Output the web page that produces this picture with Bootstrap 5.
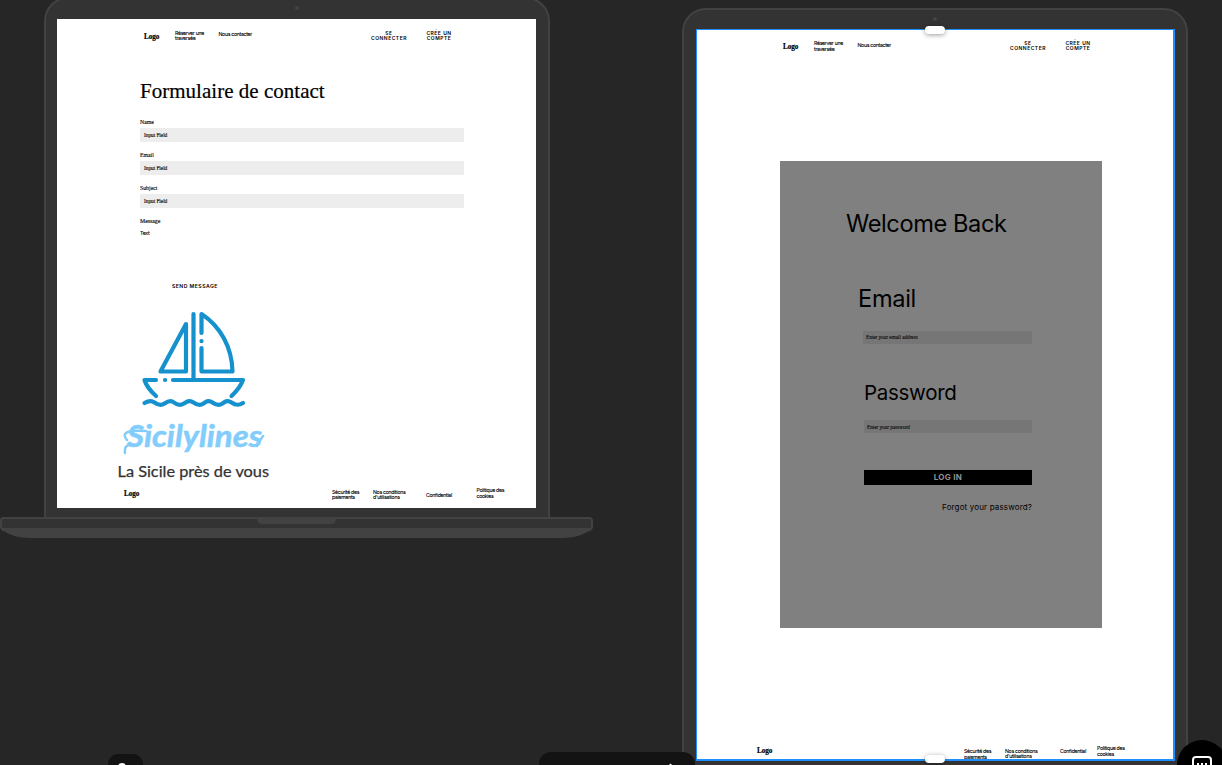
<!DOCTYPE html>
<html lang="fr">
<head>
<meta charset="utf-8">
<meta name="viewport" content="width=device-width, initial-scale=1">
<title>Sicilylines</title>
<link href="https://cdn.jsdelivr.net/npm/bootstrap@5.3.0/dist/css/bootstrap.min.css" rel="stylesheet">
<style>
body{background:#262626;color:#000;font-family:Inter,"Liberation Sans",sans-serif;font-size:5.2px;line-height:5px}
.board{width:1222px;height:765px}
.serif{font-family:"Liberation Serif",serif}
/* devices placed on the free canvas */
.device{background:#333;border:2px solid #424242}
.laptop{left:44px;top:-3px;width:506px;height:520px;border-radius:24px 24px 0 0;border-bottom:0;padding:20px 11px 0}
.tablet{left:682px;top:8px;width:506px;height:800px;border-radius:24px;padding:19px 12px 0}
.cam{width:4px;height:4px;background:#444;left:249px}
.base{left:0;top:516px}
.screen{width:479px;height:489px;background:#fff}
.tablet .screen{height:732px}
.selection{left:696px;top:29px;width:479px;height:732px;border:solid #1e8fff;border-width:1px 2px 2px 1px}
.handle{width:20px;height:8px;left:925px;background:#fff;box-shadow:0 1px 5px #0006}
.topnav{height:48px;padding:12px 0 0 87px;display:grid;grid-template-columns:31px 43.5px 140px 60px 40px;align-items:start}
.brandname{font-weight:700;font-size:7.2px;line-height:8px;letter-spacing:-.1px;-webkit-text-stroke:.2px #000}
.topnav .brandname{margin-top:2px}
.navtext{letter-spacing:-.3px;-webkit-text-stroke:.1px #000}
.navbtn{font-weight:600;letter-spacing:.5px;width:61px;text-align:center;font-size:5px}
.contact{padding:11px 0 0 83px;width:407px;height:214px}
.contact h1{font-size:21px;line-height:26px;margin:0 0 14px;letter-spacing:.02px;white-space:nowrap;-webkit-text-stroke:.2px #000}
.lbl{font-size:5.8px;line-height:8px;margin-bottom:2px;letter-spacing:0}
.field{background:#ededed;height:14px;padding:0 4px;font-size:5.4px;line-height:14px;margin-bottom:9px;letter-spacing:-.05px}
.lbl,.field,.inp{-webkit-text-stroke:.12px #000}
.sendrow{padding-left:115px;height:28px;font-weight:600;font-size:5.2px;letter-spacing:.42px;line-height:10px}
.foot{display:grid;align-items:start}
.foot-a{height:24px;padding-left:67px;grid-template-columns:208px 41px 53px 50.5px 50px}
.foot-b{height:20px;padding-left:61px;grid-template-columns:207px 41px 55px 37px 50px}
.login{background:#808080;width:322px;height:467px;margin:84px 0 114px 84px;padding:46px 70px 0 66px}
.login h2{font-size:23.6px;line-height:34px;margin:0;font-weight:400;white-space:nowrap;letter-spacing:-.3px}
.login .inp{background:#767676;height:13px;line-height:13px;font-size:5.2px;padding-left:3px;color:#151515}
.loginbtn{background:#000;color:#929292;height:15px;font-size:8px;line-height:15px;font-weight:700;letter-spacing:.3px}
.forgot{font-size:8px;line-height:12px;letter-spacing:.15px}
.toolbar1{left:539px;top:752px;width:156px;height:30px;background:#131313;border-radius:12px}
.tool2{left:108px;top:754px;width:35px;height:30px;background:#131313;border-radius:10px}
.chat{left:1177px;top:740px;width:50px;height:50px;background:#000}
</style>
<script src="https://cdn.jsdelivr.net/npm/bootstrap@5.3.0/dist/js/bootstrap.bundle.min.js"></script>
</head>
<body class="m-0 overflow-hidden">
<main class="board position-relative overflow-hidden">
  <section class="device laptop position-absolute">
    <span class="cam rounded-circle position-absolute" style="top:7px"></span>
    <div class="screen overflow-hidden">
      <nav class="topnav">
        <div class="brandname serif">Logo</div>
        <div class="navtext">Réserver une<br>traversée</div>
        <div class="navtext" style="margin-top:1px">Nous contacter</div>
        <div class="navbtn">SE<br>CONNECTER</div>
        <div class="navbtn" style="margin-left:-10px">CRÉE UN<br>COMPTE</div>
      </nav>
      <div class="contact serif">
        <h1>Formulaire de contact</h1>
        <div class="lbl">Name</div><div class="field">Input Field</div>
        <div class="lbl">Email</div><div class="field">Input Field</div>
        <div class="lbl">Subject</div><div class="field">Input Field</div>
        <div class="lbl">Message</div>
        <div class="navtext" style="font-family:Inter,sans-serif;margin-top:6px">Text</div>
      </div>
      <div class="sendrow">SEND MESSAGE</div>
      <svg class="d-block" style="margin-left:53px" width="170" height="178" viewBox="110 309 170 178">
        <g fill="none" stroke="#1591ce" stroke-width="4.200" stroke-linecap="round" stroke-linejoin="round">
          <path d="M193.500 314V379M186 324 160.500 371.500H186ZM201.500 333V314C220 326 232 347 232.500 371.500H201.500V348M201.500 341V341.200"/>
          <path d="M156 396Q147 388 144.500 380H156M165 380H165.200M173 380H243Q240 388 231.500 396"/>
          <path d="M144.500 403C148 401 151 400 154.500 402.500S161 406 164.500 403.500S171 400 174 402.500S180 406 184 403.500S190 400 193.500 402.500S200 406 203.500 403.500S209 400 212.500 402.500S219 406 222.500 403.500S228 400 231.500 402.500S238 406 243 403"/>
        </g>
        <text x="127" y="447" textLength="135" lengthAdjust="spacingAndGlyphs" font-family="Lato,sans-serif" font-style="italic" font-weight="700" font-size="30" fill="#82cdfb" stroke="#82cdfb" stroke-width=".5">Sicilylines</text>
        <path d="M125 453Q124 445 130 445M127 440Q122 434 128 432Q134 430 146 431M257 446Q260 440 263 436" fill="none" stroke="#82cdfb" stroke-width="2.500" stroke-linecap="round"/>
        <text x="117.500" y="476.500" textLength="151.500" lengthAdjust="spacingAndGlyphs" font-family="Lato,sans-serif" font-size="14.500" fill="#333" stroke="#333" stroke-width=".25">La Sicile près de vous</text>
      </svg>
      <footer class="foot foot-a">
        <div class="brandname serif" style="margin-top:3px">Logo</div>
        <div class="navtext" style="margin-top:3px">Sécurité des<br>paiements</div>
        <div class="navtext" style="margin-top:3px">Nos conditions<br>d'utilisations</div>
        <div class="navtext" style="margin-top:6px">Confidential</div>
        <div class="navtext" style="line-height:6px">Politique des<br>cookies</div>
      </footer>
    </div>
  </section>
  <svg class="base position-absolute" width="594" height="23" viewBox="0 516 594 23">
    <path d="M1 518H592V529Q580 538 563 538H30Q12 538 1 529Z" fill="#424242"/>
    <rect x="1" y="518" width="591" height="11" rx="2.500" fill="#333" stroke="#424242" stroke-width="2"/>
    <path d="M2 528H591V531H2Z" fill="#424242"/>
    <path d="M257 518H336Q336 524 330 524H263Q257 524 257 518Z" fill="#424242"/>
  </svg>

  <section class="device tablet position-absolute">
    <span class="cam rounded-circle position-absolute" style="top:7px"></span>
    <div class="screen overflow-hidden">
      <nav class="topnav">
        <div class="brandname serif">Logo</div>
        <div class="navtext" style="line-height:6px;margin-top:-.6px">Réserver une<br>traversée</div>
        <div class="navtext" style="margin-top:2px">Nous contacter</div>
        <div class="navbtn">SE<br>CONNECTER</div>
        <div class="navbtn" style="margin-left:-10px">CRÉE UN<br>COMPTE</div>
      </nav>
      <div class="login">
        <h2 style="letter-spacing:-.4px">Welcome Back</h2>
        <h2 style="margin:41px 0 15px 12px">Email</h2>
        <div class="inp serif" style="margin:0 0 0 17px">Enter your email address</div>
        <h2 style="margin:32px 0 10px 18px;font-size:20.5px">Password</h2>
        <div class="inp serif" style="margin-left:18px;line-height:14px">Enter your password</div>
        <div class="loginbtn text-center" style="margin:37px 0 16px 18px">LOG IN</div>
        <div class="forgot text-end">Forgot your password?</div>
      </div>
      <footer class="foot foot-b">
        <div class="brandname serif" style="margin-top:5px">Logo</div>
        <div class="navtext" style="margin-top:6px;line-height:6px">Sécurité des<br>paiements</div>
        <div class="navtext" style="margin-top:7px">Nos conditions<br>d'utilisations</div>
        <div class="navtext" style="margin-top:7px">Confidential</div>
        <div class="navtext" style="margin-top:3px;line-height:6px">Politique des<br>cookies</div>
      </footer>
    </div>
  </section>
  <div class="selection position-absolute"></div>
  <span class="handle rounded-pill position-absolute" style="top:26px"></span>
  <span class="handle rounded-pill position-absolute" style="top:755px"></span>

  <div class="tool2 position-absolute"><svg class="d-block" width="35" height="11"><circle cx="14" cy="13" r="3" fill="none" stroke="#fff" stroke-width="2"/></svg></div>
  <div class="toolbar1 position-absolute"><svg class="d-block" width="156" height="13"><path d="M128 15 131.500 11.500 135 15" fill="#fff"/></svg></div>
  <div class="chat rounded-circle position-absolute">
    <svg class="d-block" width="50" height="25" viewBox="0 0 50 25"><rect x="16" y="17" width="18" height="15" rx="3" fill="none" stroke="#fff" stroke-width="2"/><path d="M20 24h2M24 24h2M28 24h2" stroke="#fff" stroke-width="2"/></svg>
  </div>
</main>
</body>
</html>
